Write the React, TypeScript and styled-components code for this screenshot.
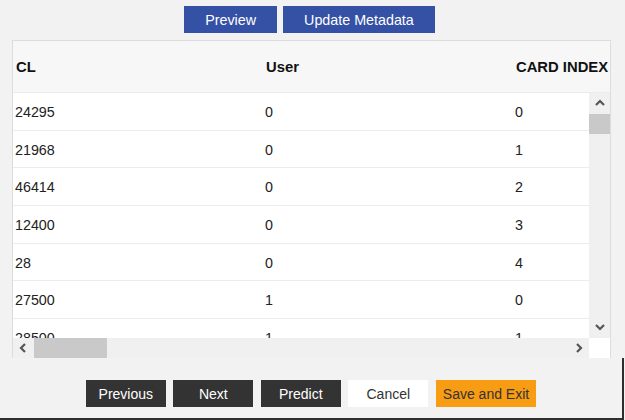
import React from "react";
import styled, { createGlobalStyle } from "styled-components";

const GlobalStyle = createGlobalStyle`
	html, body {
		margin: 0;
		padding: 0;
		background: #f2f2f2;
		font-family: "Liberation Sans", Arial, sans-serif;
	}
`;

interface Row {
	cl: string;
	user: string;
	cardIndex: string;
}

const rows: Row[] = [
	{ cl: "24295", user: "0", cardIndex: "0" },
	{ cl: "21968", user: "0", cardIndex: "1" },
	{ cl: "46414", user: "0", cardIndex: "2" },
	{ cl: "12400", user: "0", cardIndex: "3" },
	{ cl: "28", user: "0", cardIndex: "4" },
	{ cl: "27500", user: "1", cardIndex: "0" },
	{ cl: "28500", user: "1", cardIndex: "1" },
];

type Dir = "up" | "down" | "left" | "right";

const chevronPoints: Record<Dir, string> = {
	up: "1,6 5,2 9,6",
	down: "1,2 5,6 9,2",
	left: "6,1 2,5 6,9",
	right: "3,1 7,5 3,9",
};

const Chevron = ({ dir }: { dir: Dir }) => (
	<svg width="10" height="10" viewBox="0 0 10 10">
		<polyline
			points={chevronPoints[dir]}
			fill="none"
			stroke="#555"
			strokeWidth="2.2"
		/>
	</svg>
);

export default function App() {
	return (
		<Page>
			<GlobalStyle />
			<TopBar>
				<BlueButton>Preview</BlueButton>
				<BlueButton>Update Metadata</BlueButton>
			</TopBar>

			<TableFrame>
				<HeaderRow>
					<HeadCell>CL</HeadCell>
					<HeadCell>User</HeadCell>
					<HeadCell>CARD INDEX</HeadCell>
				</HeaderRow>
				<BodyGrid>
					<Viewport>
						{rows.map((r, i) => (
							<BodyRow key={i}>
								<Cell>{r.cl}</Cell>
								<Cell>{r.user}</Cell>
								<Cell>{r.cardIndex}</Cell>
							</BodyRow>
						))}
					</Viewport>
					<VScroll>
						<ArrowBtn>
							<Chevron dir="up" />
						</ArrowBtn>
						<VThumb />
						<Track />
						<ArrowBtn>
							<Chevron dir="down" />
						</ArrowBtn>
					</VScroll>
					<HScroll>
						<ArrowBtn>
							<Chevron dir="left" />
						</ArrowBtn>
						<HThumb />
						<Track />
						<ArrowBtn>
							<Chevron dir="right" />
						</ArrowBtn>
					</HScroll>
					<Corner />
				</BodyGrid>
			</TableFrame>

			<Footer>
				<ActionButton variant="dark">Previous</ActionButton>
				<ActionButton variant="dark">Next</ActionButton>
				<ActionButton variant="dark">Predict</ActionButton>
				<ActionButton variant="light">Cancel</ActionButton>
				<ActionButton variant="accent">Save and Exit</ActionButton>
			</Footer>
		</Page>
	);
}

const Page = styled.div`
	width: 625px;
	height: 420px;
	display: flex;
	flex-direction: column;
	box-sizing: border-box;
	overflow: hidden;
`;

const TopBar = styled.div`
	display: flex;
	justify-content: center;
	gap: 6px;
	padding: 6px 6px 0 0;
	margin-bottom: 7px;
`;

const BlueButton = styled.button`
	height: 27px;
	padding: 0 21px;
	border: none;
	background: #3551a5;
	color: #fff;
	font-family: "Liberation Sans", Arial, sans-serif;
	font-size: 14.3px;
`;

const TableFrame = styled.div`
	margin-left: 12px;
	width: 599px;
	height: 318px;
	box-sizing: border-box;
	border: 1px solid #dcdcdc;
	background: #fff;
	display: flex;
	flex-direction: column;
`;

const HeaderRow = styled.div`
	height: 51px;
	flex-shrink: 0;
	display: flex;
	align-items: center;
	background: #f7f7f7;
	border-bottom: 1px solid #ececec;
	overflow: hidden;
`;

const HeadCell = styled.div`
	width: 250px;
	flex-shrink: 0;
	padding-left: 3px;
	box-sizing: border-box;
	font-size: 14.8px;
	font-weight: 700;
	color: #111;
	white-space: nowrap;
`;

const BodyGrid = styled.div`
	display: grid;
	grid-template-columns: 576px 21px;
	grid-template-rows: 245px 20px;
`;

const Viewport = styled.div`
	overflow: hidden;
	background: #fff;
`;

const BodyRow = styled.div`
	height: 37.7px;
	box-sizing: border-box;
	display: flex;
	align-items: center;
	padding-top: 1px;
	border-bottom: 1px solid #ececec;
`;

const Cell = styled.div`
	width: 250px;
	flex-shrink: 0;
	padding-left: 2px;
	box-sizing: border-box;
	font-size: 14.3px;
	color: #222;
`;

const VScroll = styled.div`
	display: flex;
	flex-direction: column;
	background: #f0f0f0;
`;

const HScroll = styled.div`
	display: flex;
	background: #f0f0f0;
`;

const ArrowBtn = styled.div`
	width: 21px;
	height: 21px;
	flex-shrink: 0;
	display: flex;
	align-items: center;
	justify-content: center;
	${HScroll} & {
		height: 20px;
	}
`;

const Track = styled.div`
	flex: 1;
`;

const VThumb = styled.div`
	height: 20px;
	background: #c9c9c9;
`;

const HThumb = styled.div`
	width: 73px;
	background: #c9c9c9;
`;

const Corner = styled.div`
	background: #fff;
`;

const Footer = styled.div`
	flex: 1;
	display: flex;
	justify-content: center;
	align-items: flex-start;
	gap: 7.5px;
	padding-top: 22px;
	margin-right: 1px;
	border-right: 2px solid #2e2e2e;
	border-bottom: 2px solid #2e2e2e;
`;

const variants = {
	dark: { bg: "#333333", fg: "#ffffff" },
	light: { bg: "#ffffff", fg: "#333333" },
	accent: { bg: "#f89c14", fg: "#333333" },
};

const ActionButton = styled.button<{ variant: keyof typeof variants }>`
	min-width: 80px;
	height: 27px;
	padding: 0 7px;
	border: none;
	background: ${(p) => variants[p.variant].bg};
	color: ${(p) => variants[p.variant].fg};
	font-family: "Liberation Sans", Arial, sans-serif;
	font-size: 14px;
`;
